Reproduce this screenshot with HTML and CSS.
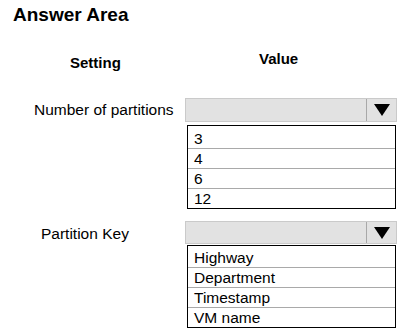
FILE: index.html
```html
<!DOCTYPE html>
<html lang="en">
<head>
  <meta charset="UTF-8">
  <meta name="viewport" content="width=device-width, initial-scale=1">
  <title>Answer Area</title>
  <link rel="stylesheet" href="styles.css">
</head>
<body>

  <div class="answer-area">
    <h1 class="title">Answer Area</h1>

    <!-- Judul kolom -->
    <div class="row head-row">
      <div class="col-label"><span class="head head-setting">Setting</span></div>
      <div class="col-value"><span class="head head-value">Value</span></div>
    </div>

    <!-- Jumlah partisi -->
    <div class="row field field-partitions">
      <div class="col-label"><span class="label label-partitions">Number of partitions</span></div>
      <div class="col-value">
        <div class="select">
          <span class="select-box"></span>
          <span class="select-arrow">
            <svg width="16" height="12" viewBox="0 0 16 12"><polygon points="0,0 16,0 8,12" fill="#000"/></svg>
          </span>
        </div>
        <ul class="options">
          <li>3</li>
          <li>4</li>
          <li>6</li>
          <li>12</li>
        </ul>
      </div>
    </div>

    <!-- Kunci partisi -->
    <div class="row field field-key">
      <div class="col-label"><span class="label label-key">Partition Key</span></div>
      <div class="col-value">
        <div class="select">
          <span class="select-box"></span>
          <span class="select-arrow">
            <svg width="16" height="12" viewBox="0 0 16 12"><polygon points="0,0 16,0 8,12" fill="#000"/></svg>
          </span>
        </div>
        <ul class="options">
          <li>Highway</li>
          <li>Department</li>
          <li>Timestamp</li>
          <li>VM name</li>
        </ul>
      </div>
    </div>
  </div>

</body>
</html>
```

FILE: styles.css
```css
:root {
  --text: #000000;
  --select-bg: #e2e2e2;
  --select-border: #cacaca;
  --select-sep: #a8a8a8;
  --divider: #a9a9a9;
}

* {
  box-sizing: border-box;
  margin: 0;
  padding: 0;
}

body {
  font-family: 'Liberation Sans', Arial, sans-serif;
  background: #ffffff;
  color: var(--text);
}

.answer-area {
  padding-top: 4px;
}

.title {
  font-size: 19px;
  font-weight: bold;
  line-height: 22px;
  padding-left: 13px;
}

.row {
  display: flex;
}

.col-label {
  width: 185px;
  flex-shrink: 0;
}

.col-value {
  width: 212px;
}

.head-row {
  margin-top: 24px;
  height: 22px;
}

.head {
  display: block;
  font-size: 15px;
  font-weight: bold;
  line-height: 18px;
}

.head-setting {
  margin-top: 4px;
  padding-left: 70px;
}

.head-value {
  padding-left: 74px;
}

.field-partitions {
  margin-top: 26px;
}

.field-key {
  margin-top: 12px;
}

.label {
  display: block;
  font-size: 15.5px;
  line-height: 24px;
}

.label-partitions {
  padding-left: 34px;
}

.label-key {
  padding-left: 41px;
  padding-top: 1px;
}

.select {
  display: flex;
  height: 24px;
  background: var(--select-bg);
  border: 1px solid var(--select-border);
}

.field-key .select {
  height: 23px;
}

.select-box {
  flex: 1;
}

.select-arrow {
  width: 30px;
  border-left: 1px solid var(--select-sep);
  display: flex;
  align-items: center;
  justify-content: center;
}

.options {
  list-style: none;
  margin: 3px 1px 0 2px;
  border: 1px solid #000000;
}

.field-key .options {
  margin-top: 1px;
}

.options li {
  font-size: 15.5px;
  height: 20px;
  line-height: 19px;
  padding-left: 6px;
  border-top: 1px solid var(--divider);
}

.options li:first-child {
  border-top: none;
  height: 22px;
  padding-top: 3px;
}

.field-key .options li:first-child {
  height: 21px;
  padding-top: 2px;
}
```
